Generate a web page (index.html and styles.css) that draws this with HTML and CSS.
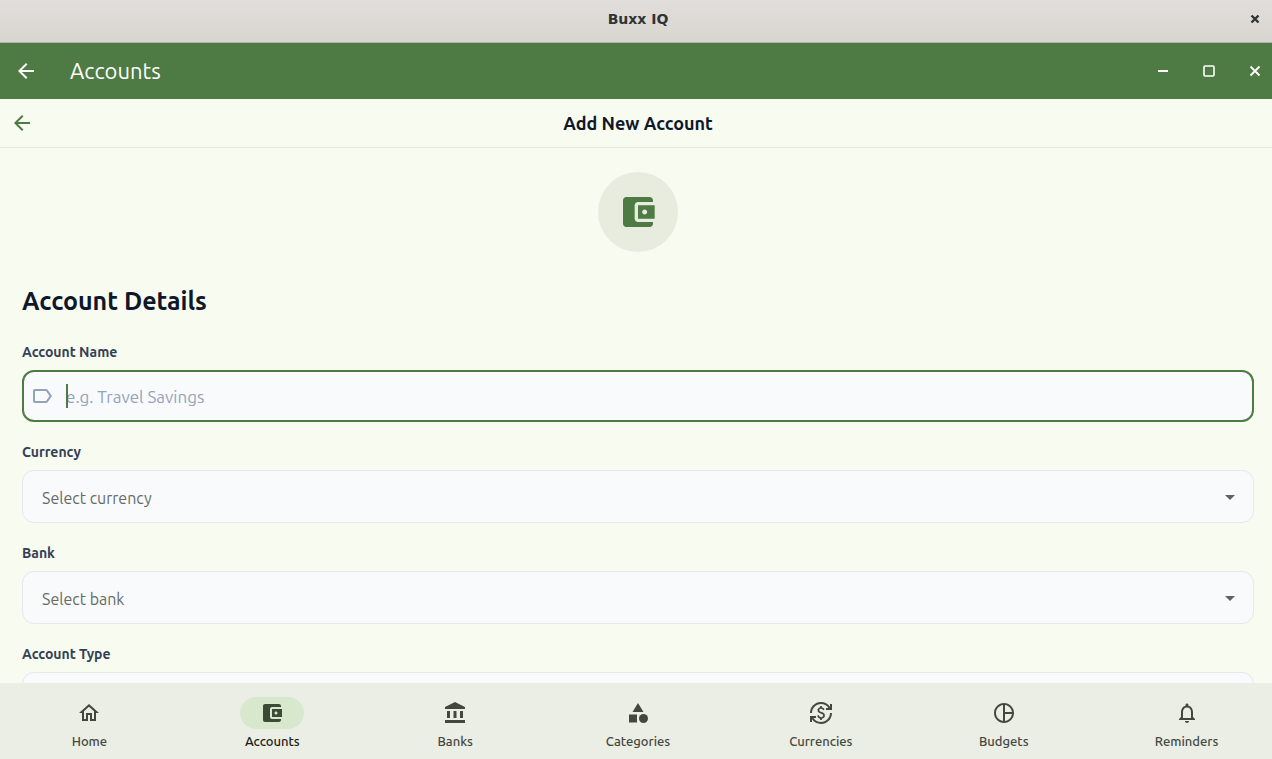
FILE: index.html
```html
<!DOCTYPE html>
<html lang="en">
<head>
<meta charset="utf-8">
<meta name="viewport" content="width=device-width, initial-scale=1">
<title>Buxx IQ</title>
<link rel="stylesheet" href="styles.css">
</head>
<body>
<div class="window-bar">
  <span class="window-title">Buxx IQ</span>
  <button class="window-close" type="button" aria-label="Close window">
    <svg width="10" height="10" viewBox="0 0 10 10"><path d="M1.5 1.5l7 7M8.5 1.5l-7 7" stroke="currentColor" stroke-width="2.4"/></svg>
  </button>
</div>

<header class="app-bar">
  <button class="icon-button" type="button" aria-label="Back">
    <svg class="icon" viewBox="0 0 24 24"><path d="M20 11H7.83l5.59-5.59L12 4l-8 8 8 8 1.41-1.41L7.83 13H20v-2z"/></svg>
  </button>
  <span class="app-title">Accounts</span>
  <div class="caption-buttons">
    <button class="caption-button" type="button" aria-label="Minimize">
      <svg width="12" height="12" viewBox="0 0 12 12"><path d="M1 6h10" stroke="currentColor" stroke-width="2"/></svg>
    </button>
    <button class="caption-button" type="button" aria-label="Maximize">
      <svg width="12" height="12" viewBox="0 0 12 12"><rect x="1" y="1" width="10" height="10" rx="1" fill="none" stroke="currentColor" stroke-width="1.6"/></svg>
    </button>
    <button class="caption-button" type="button" aria-label="Close">
      <svg width="12" height="12" viewBox="0 0 12 12"><path d="M1.5 1.5l9 9M10.5 1.5l-9 9" stroke="currentColor" stroke-width="1.8"/></svg>
    </button>
  </div>
</header>

<div class="page-bar">
  <button class="icon-button" type="button" aria-label="Back to accounts">
    <svg class="icon" viewBox="0 0 24 24"><path d="M20 11H7.83l5.59-5.59L12 4l-8 8 8 8 1.41-1.41L7.83 13H20v-2z"/></svg>
  </button>
  <h1 class="page-title">Add New Account</h1>
</div>

<main class="content">
  <div class="badge">
    <svg class="badge-icon" viewBox="0 0 24 24"><path d="M21 18v1c0 1.100-.9 2-2 2H5c-1.110 0-2-.9-2-2V5c0-1.100.89-2 2-2h14c1.100 0 2 .9 2 2v1h-9c-1.110 0-2 .9-2 2v8c0 1.100.89 2 2 2h9zm-9-2h10V8H12v8zm4-2.500c-.83 0-1.500-.67-1.500-1.500s.67-1.500 1.500-1.500 1.500.67 1.500 1.500-.67 1.500-1.500 1.500z"/></svg>
  </div>
  <h2 class="section-title">Account Details</h2>
  <form class="form">
    <div class="field">
      <label class="label" for="name">Account Name</label>
      <div class="input-box">
        <svg class="icon" viewBox="0 0 24 24"><path d="M17.630 5.840C17.270 5.330 16.670 5 16 5L5 5.010C3.900 5.010 3 5.900 3 7v10c0 1.100.9 1.990 2 1.990L16 19c.67 0 1.270-.33 1.630-.84L22 12l-4.370-6.160zM16 17H5V7h11l3.550 5L16 17z"/></svg>
        <div class="input-wrap">
          <input class="input" id="name" type="text" placeholder="e.g. Travel Savings">
          <span class="caret"></span>
        </div>
      </div>
    </div>
    <div class="field">
      <label class="label" for="currency">Currency</label>
      <div class="select-box">
        <select class="select" id="currency"><option>Select currency</option></select>
        <svg class="icon" viewBox="0 0 24 24"><path d="M7 10l5 5 5-5z"/></svg>
      </div>
    </div>
    <div class="field">
      <label class="label" for="bank">Bank</label>
      <div class="select-box">
        <select class="select" id="bank"><option>Select bank</option></select>
        <svg class="icon" viewBox="0 0 24 24"><path d="M7 10l5 5 5-5z"/></svg>
      </div>
    </div>
    <div class="field">
      <label class="label" for="type">Account Type</label>
      <div class="select-box">
        <select class="select" id="type"><option></option></select>
        <svg class="icon" viewBox="0 0 24 24"><path d="M7 10l5 5 5-5z"/></svg>
      </div>
    </div>
  </form>
</main>

<nav class="nav">
  <a class="nav-item" href="#home">
    <span class="nav-pill"><svg class="icon" viewBox="0 0 24 24"><path d="M12 5.690l5 4.500V18h-2v-6H9v6H7v-7.810l5-4.500M12 3L2 12h3v8h6v-6h2v6h6v-8h3L12 3z"/></svg></span>
    <span>Home</span>
  </a>
  <a class="nav-item active" href="#accounts" aria-current="page">
    <span class="nav-pill"><svg class="icon" viewBox="0 0 24 24"><path d="M21 18v1c0 1.100-.9 2-2 2H5c-1.110 0-2-.9-2-2V5c0-1.100.89-2 2-2h14c1.100 0 2 .9 2 2v1h-9c-1.110 0-2 .9-2 2v8c0 1.100.89 2 2 2h9zm-9-2h10V8H12v8zm4-2.500c-.83 0-1.500-.67-1.500-1.500s.67-1.500 1.500-1.500 1.500.67 1.500 1.500-.67 1.500-1.500 1.500z"/></svg></span>
    <span>Accounts</span>
  </a>
  <a class="nav-item" href="#banks">
    <span class="nav-pill"><svg class="icon" viewBox="0 0 24 24"><path d="M4 10v7h3v-7H4zm6.500 0v7h3v-7h-3zM2 22h20v-3H2v3zm15-12v7h3v-7h-3zM12 1L2 6v2h20V6L12 1z"/></svg></span>
    <span>Banks</span>
  </a>
  <a class="nav-item" href="#categories">
    <span class="nav-pill"><svg class="icon" viewBox="0 0 24 24"><path d="M12 2l-5.500 9h11zM3 13.500h8v8H3z"/><circle cx="17.500" cy="17.500" r="4.500"/></svg></span>
    <span>Categories</span>
  </a>
  <a class="nav-item" href="#currencies">
    <span class="nav-pill"><svg class="icon" viewBox="0 0 24 24"><path d="M12.890 11.100c-1.780-.59-2.640-.96-2.640-1.900 0-1.020 1.110-1.390 1.810-1.390 1.310 0 1.790.99 1.900 1.340l1.580-.67c-.15-.44-.82-1.910-2.660-2.230V5h-1.750v1.260c-2.600.56-2.620 2.850-2.620 2.960 0 2.270 2.250 2.910 3.350 3.310 1.580.56 2.280 1.070 2.280 2.030 0 1.130-1.050 1.610-1.980 1.610-1.820 0-2.340-1.870-2.400-2.090l-1.660.67c.63 2.190 2.280 2.780 3.020 2.960V19h1.750v-1.240c.52-.09 3.020-.59 3.020-3.220.01-1.390-.6-2.610-3-3.440zM3 21H1v-6h6v2H4.520c1.610 2.410 4.360 4 7.480 4 4.970 0 9-4.030 9-9h2c0 6.080-4.920 11-11 11-3.720 0-7.010-1.850-9-4.670V21zM1 12C1 5.920 5.920 1 12 1c3.720 0 7.010 1.850 9 4.670V3h2v6h-6V7h2.480C17.870 4.590 15.120 3 12 3c-4.970 0-9 4.030-9 9H1z"/></svg></span>
    <span>Currencies</span>
  </a>
  <a class="nav-item" href="#budgets">
    <span class="nav-pill"><svg class="icon" viewBox="0 0 24 24"><path d="M12 2C6.480 2 2 6.480 2 12s4.480 10 10 10 10-4.480 10-10S17.520 2 12 2zm1 2.070c3.610.45 6.480 3.330 6.930 6.930H13V4.070zM4 12c0-4.060 3.070-7.440 7-7.930v15.870c-3.930-.5-7-3.880-7-7.940zm9 7.930V13h6.930c-.45 3.610-3.320 6.480-6.930 6.930z"/></svg></span>
    <span>Budgets</span>
  </a>
  <a class="nav-item" href="#reminders">
    <span class="nav-pill"><svg class="icon" viewBox="0 0 24 24"><path d="M12 22c1.100 0 2-.9 2-2h-4c0 1.100.9 2 2 2zm6-6v-5c0-3.070-1.630-5.640-4.500-6.320V4c0-.83-.67-1.500-1.500-1.500s-1.500.67-1.500 1.500v.68C7.640 5.360 6 7.920 6 11v5l-2 2v1h16v-1l-2-2zm-2 1H8v-6c0-2.480 1.510-4.500 4-4.500s4 2.020 4 4.500v6z"/></svg></span>
    <span>Reminders</span>
  </a>
</nav>
</body>
</html>
```

FILE: styles.css
```css
* {
  box-sizing: border-box;
}

body {
  margin: 0;
  height: 100vh;
  display: flex;
  flex-direction: column;
  background: #f8fbf0;
  color: #0f172a;
  font-family: Ubuntu, "Noto Sans", "Open Sans", sans-serif;
}

button {
  display: flex;
  align-items: center;
  justify-content: center;
  padding: 0;
  border: 0;
  background: none;
  color: inherit;
}

.icon {
  display: block;
  flex: none;
  width: 24px;
  height: 24px;
  fill: currentColor;
}

/* Window frame */
.window-bar {
  flex: none;
  display: grid;
  grid-template-columns: 34px 1fr 34px;
  align-items: center;
  height: 43px;
  padding: 0 0 4px 4px;
  border-bottom: 1px solid #b6b1aa;
  background: linear-gradient(#e1dedb, #d9d5d0);
  color: #2e3436;
}

.window-title {
  grid-column: 2;
  text-align: center;
  font-family: "DejaVu Sans", sans-serif;
  font-size: 14px;
  font-weight: 700;
  line-height: 20px;
}

.window-close {
  height: 24px;
}

/* Application bar */
.app-bar {
  flex: none;
  display: flex;
  align-items: center;
  height: 56px;
  padding-left: 6px;
  background: #4e7a43;
  color: #fff;
}

.icon-button {
  flex: none;
  width: 40px;
  height: 40px;
}

.app-title {
  margin-left: 24px;
  font-size: 22px;
  line-height: 28px;
}

.caption-buttons {
  display: flex;
  gap: 12px;
  margin-left: auto;
}

.caption-button {
  width: 34px;
  height: 32px;
}

/* Page bar */
.page-bar {
  flex: none;
  display: grid;
  grid-template-columns: 40px 1fr 38px;
  align-items: center;
  height: 49px;
  padding-left: 2px;
  border-bottom: 1px solid #e6eadd;
}

.page-bar .icon-button {
  color: #4e7a43;
}

.page-title {
  margin: 0;
  text-align: center;
  font-size: 18px;
  font-weight: 600;
  line-height: 24px;
}

/* Form */
.content {
  flex: 1;
  min-height: 0;
  overflow-y: auto;
  scrollbar-width: none;
  padding: 24px 18px 24px 22px;
}

.badge {
  display: flex;
  align-items: center;
  justify-content: center;
  width: 80px;
  height: 80px;
  margin: 0 auto;
  border-radius: 50%;
  background: #e7ecdf;
  color: #4e7a43;
}

.badge-icon {
  width: 40px;
  height: 40px;
  fill: currentColor;
}

.section-title {
  margin: 32px 0 24px;
  font-size: 25px;
  font-weight: 600;
  line-height: 34px;
}

.form {
  display: grid;
  gap: 20px;
}

.field {
  display: grid;
  gap: 8px;
}

.label {
  color: #334155;
  font-size: 14px;
  font-weight: 700;
  line-height: 20px;
}

.input-box,
.select-box {
  display: flex;
  align-items: center;
  height: 53px;
  border: 1px solid #e2e8f0;
  border-radius: 12px;
  background: #f8fafc;
}

.input-box {
  height: 52px;
  padding: 0 12px 0 6px;
  border: 2px solid #4e7a43;
  color: #94a3b8;
}

.input-wrap {
  position: relative;
  flex: 1;
  margin-left: 12px;
}

.input {
  display: block;
  width: 100%;
  height: 24px;
  padding: 0;
  border: 0;
  outline: 0;
  background: none;
  color: #0f172a;
  font: inherit;
  font-size: 17px;
}

.input::placeholder {
  color: #94a3b8;
  opacity: 1;
}

.caret {
  position: absolute;
  top: 0;
  left: 0;
  width: 2px;
  height: 24px;
  background: #4e7a43;
}

.select-box {
  position: relative;
  color: #616161;
}

.select-box .icon {
  position: absolute;
  right: 11px;
  pointer-events: none;
}

.select {
  appearance: none;
  width: 100%;
  height: 100%;
  padding: 2px 48px 0 19px;
  border: 0;
  outline: 0;
  background: none;
  color: #666a66;
  font: inherit;
  font-size: 16px;
}

/* Bottom navigation */
.nav {
  flex: none;
  display: grid;
  grid-template-columns: repeat(7, 1fr);
  gap: 12px;
  height: 76px;
  padding: 14px 0 0 4px;
  background: #ebeee4;
}

.nav-item {
  display: flex;
  flex-direction: column;
  align-items: center;
  gap: 4px;
  color: #43483f;
  font-size: 13px;
  font-weight: 500;
  line-height: 16px;
  text-decoration: none;
}

.nav-pill {
  display: flex;
  align-items: center;
  justify-content: center;
  width: 64px;
  height: 32px;
  border-radius: 16px;
}

.nav-item.active {
  color: #191d17;
}

.active .nav-pill {
  background: #d8e8cd;
  color: #3c4b35;
}
```
